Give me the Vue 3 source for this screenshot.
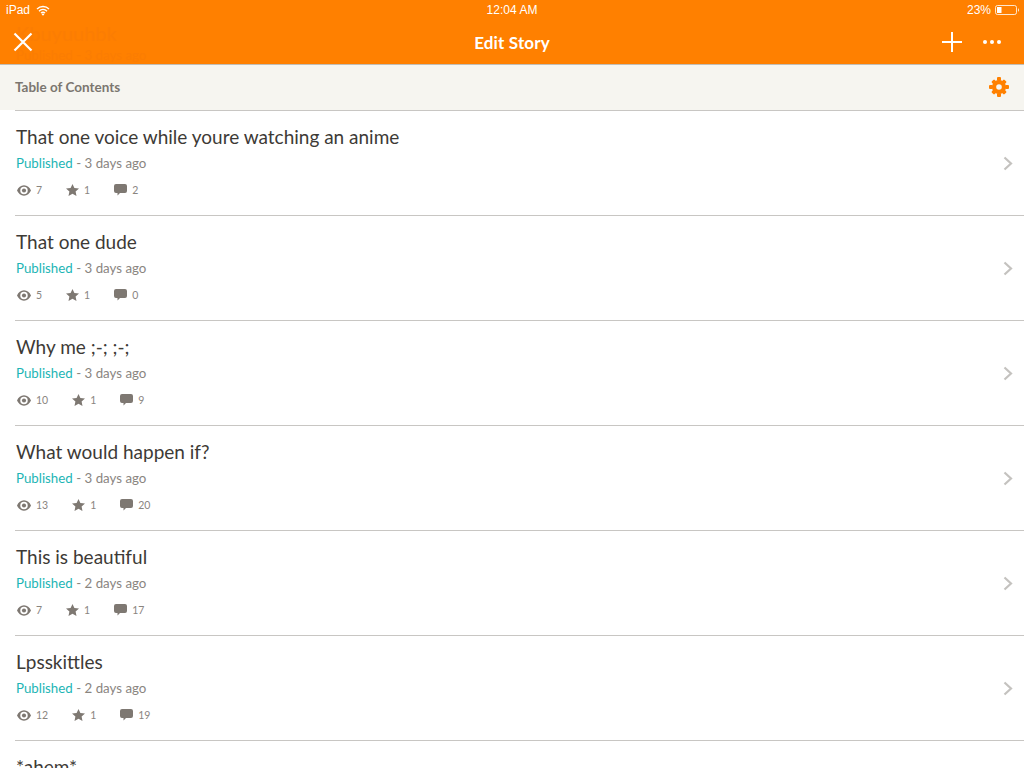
<script setup>
const stories = [
  { title: 'That one voice while youre watching an anime', age: '3 days ago', views: 7, stars: 1, comments: 2 },
  { title: 'That one dude', age: '3 days ago', views: 5, stars: 1, comments: 0 },
  { title: 'Why me ;-; ;-;', age: '3 days ago', views: 10, stars: 1, comments: 9 },
  { title: 'What would happen if?', age: '3 days ago', views: 13, stars: 1, comments: 20 },
  { title: 'This is beautiful', age: '2 days ago', views: 7, stars: 1, comments: 17 },
  { title: 'Lpsskittles', age: '2 days ago', views: 12, stars: 1, comments: 19 },
  { title: '*ahem*', age: '2 days ago', views: 9, stars: 1, comments: 11 }
]
</script>

<template>
  <div class="page">
    <header class="top">
      <div class="ghost">
        <div class="ghost-title">Kbuyuuhbk</div>
        <div class="ghost-sub">Published - 3 days ago</div>
      </div>
      <div class="status">
        <div class="status-left">
          <span>iPad</span>
          <svg width="14" height="11" viewBox="0 0 14 11" class="wifi">
            <path d="M1 4a8.500 8.500 0 0 1 12 0M3 6.200a5.400 5.400 0 0 1 8 0M5 8.200a2.600 2.600 0 0 1 4 0" fill="none" stroke="#fff" stroke-width="1.300"/>
            <path d="M7 10.800 5.600 9.200a2 2 0 0 1 2.800 0z" fill="#fff"/>
          </svg>
        </div>
        <div class="status-time">12:04 AM</div>
        <div class="status-right">
          <span>23%</span>
          <svg width="24" height="10" viewBox="0 0 24 10" class="battery">
            <rect x="0.500" y="0.500" width="21" height="9" rx="2" fill="none" stroke="#fff" stroke-opacity="0.800"/>
            <rect x="2" y="2" width="4.500" height="6" fill="#fff"/>
            <path d="M23 3.500c.7 0 1 .5 1 1v1c0 .5-.3 1-1 1z" fill="#fff" opacity="0.800"/>
          </svg>
        </div>
      </div>
      <nav class="nav">
        <svg class="close" width="20" height="20" viewBox="0 0 20 20">
          <path d="M1.500 1.500 18.500 18.500M18.500 1.500 1.500 18.500" stroke="#fff" stroke-width="2.200" fill="none"/>
        </svg>
        <div class="nav-title">Edit Story</div>
        <div class="nav-actions">
          <svg width="20" height="20" viewBox="0 0 20 20">
            <path d="M10 0V20M0 10H20" stroke="#fff" stroke-width="2" fill="none"/>
          </svg>
          <svg width="18" height="4" viewBox="0 0 18 4">
            <circle cx="2" cy="2" r="2" fill="#fff"/>
            <circle cx="9" cy="2" r="2" fill="#fff"/>
            <circle cx="16" cy="2" r="2" fill="#fff"/>
          </svg>
        </div>
      </nav>
    </header>

    <div class="toc">
      <span class="toc-label">Table of Contents</span>
      <svg width="20" height="20" viewBox="0 0 20 20">
        <g fill="#ff8000">
          <path d="M10 3a7 7 0 1 0 0 14 7 7 0 0 0 0-14zm0 4.200a2.800 2.800 0 1 1 0 5.600 2.800 2.800 0 0 1 0-5.600z" fill-rule="evenodd"/>
          <rect x="8" y="0" width="4" height="4" rx="1"/>
          <rect x="8" y="16" width="4" height="4" rx="1"/>
          <rect x="0" y="8" width="4" height="4" rx="1"/>
          <rect x="16" y="8" width="4" height="4" rx="1"/>
          <rect x="8" y="1" width="4" height="4" rx="1" transform="rotate(45 10 10)"/>
          <rect x="8" y="15" width="4" height="4" rx="1" transform="rotate(45 10 10)"/>
          <rect x="1" y="8" width="4" height="4" rx="1" transform="rotate(45 10 10)"/>
          <rect x="15" y="8" width="4" height="4" rx="1" transform="rotate(45 10 10)"/>
        </g>
      </svg>
    </div>

    <ul class="list">
      <li v-for="s in stories" :key="s.title" class="row">
        <div class="body">
          <div class="title">{{ s.title }}</div>
          <div class="meta"><span class="pub">Published</span> - {{ s.age }}</div>
          <div class="stats">
            <span class="stat">
              <svg class="eye" width="14" height="11" viewBox="0 0 15 11">
                <path d="M7.500 0C4 0 1.500 2.400 0 5.500 1.500 8.600 4 11 7.500 11s6-2.400 7.500-5.500C13.500 2.400 11 0 7.500 0zm0 1.500a4 4 0 1 1 0 8 4 4 0 0 1 0-8z" fill="#7e7872" fill-rule="evenodd"/>
                <circle cx="7.500" cy="5.500" r="2.200" fill="#7e7872"/>
              </svg>
              {{ s.views }}
            </span>
            <span class="stat">
              <svg width="13" height="12" viewBox="0 0 13 12">
                <path d="M6.500 0 8.400 4.100 13 4.600 9.600 7.600 10.500 12 6.500 9.800 2.500 12 3.400 7.600 0 4.600 4.600 4.100z" fill="#7e7872"/>
              </svg>
              {{ s.stars }}
            </span>
            <span class="stat">
              <svg width="13" height="12" viewBox="0 0 13 12">
                <path d="M2 0h9a2 2 0 0 1 2 2v5a2 2 0 0 1-2 2H6l-2.500 2.500V9H2a2 2 0 0 1-2-2V2a2 2 0 0 1 2-2z" fill="#7e7872"/>
              </svg>
              {{ s.comments }}
            </span>
          </div>
        </div>
        <svg class="chev" width="10" height="15" viewBox="0 0 10 15">
          <path d="M1.500 1.500 8 7.500 1.500 13.500" fill="none" stroke="#c4c2bf" stroke-width="2.200"/>
        </svg>
      </li>
    </ul>
  </div>
</template>

<style>
html, body { margin: 0; background: #fff; overflow: hidden; }
</style>

<style scoped>
.page {
  width: 1024px;
  height: 768px;
  overflow: hidden;
  font-family: Lato, "Open Sans", sans-serif;
  background: #fff;
}
.top {
  position: relative;
  height: 64px;
  background: #ff8000;
  border-bottom: 1px solid #c2bdb5;
  color: #fff;
}
.ghost {
  position: absolute;
  left: 16px;
  top: 21px;
  color: #fb7d03;
}
.ghost-title { font-size: 20px; line-height: 24px; }
.ghost-sub { font-size: 13.300px; line-height: 18px; margin-top: 1px; }
.status {
  position: relative;
  height: 20px;
  display: grid;
  grid-template-columns: 1fr auto 1fr;
  align-items: center;
  padding: 0 5px 0 6px;
  font-family: "Liberation Sans", Arial, sans-serif;
  font-size: 12px;
}
.status-left { display: flex; align-items: center; gap: 6px; }
.status-time { letter-spacing: 0.05px; margin-left: -1px; }
.status-right { display: flex; align-items: center; justify-content: flex-end; gap: 4px; }
.nav {
  position: relative;
  height: 44px;
  display: flex;
  align-items: center;
  justify-content: space-between;
  padding: 0 23px 0 13px;
}
.nav-title {
  position: absolute;
  left: 0;
  right: 0;
  text-align: center;
  font-size: 17px;
  font-weight: 700;
  letter-spacing: 0.15px;
}
.nav-actions { display: flex; align-items: center; gap: 21px; }
.toc {
  height: 45px;
  box-sizing: border-box;
  background: #f6f5f0;
  display: flex;
  align-items: center;
  justify-content: space-between;
  padding: 0 15px 2px;
}
.toc-label {
  font-size: 13.500px;
  font-weight: 700;
  color: #7b766f;
}
.list { list-style: none; margin: 0; padding: 0; }
.row {
  height: 105px;
  box-sizing: border-box;
  margin-left: 15px;
  border-top: 1px solid #c8c6c3;
  display: flex;
  align-items: center;
  justify-content: space-between;
  padding: 0 11px 0 1px;
}
.body { align-self: flex-start; padding-top: 13px; }
.title {
  font-size: 19px;
  line-height: 26px;
  color: #3d3a36;
  white-space: nowrap;
}
.meta {
  margin-top: 4px;
  font-size: 13.300px;
  line-height: 18px;
  color: #8a857f;
}
.pub { color: #1cb5b5; }
.stats {
  margin-top: 9px;
  display: flex;
  gap: 24px;
  font-size: 10.500px;
  line-height: 18px;
  color: #8a857f;
}
.stat { display: flex; align-items: center; gap: 5px; }
.stat svg { flex: none; }
.stat .eye { margin-left: 1px; }
</style>
